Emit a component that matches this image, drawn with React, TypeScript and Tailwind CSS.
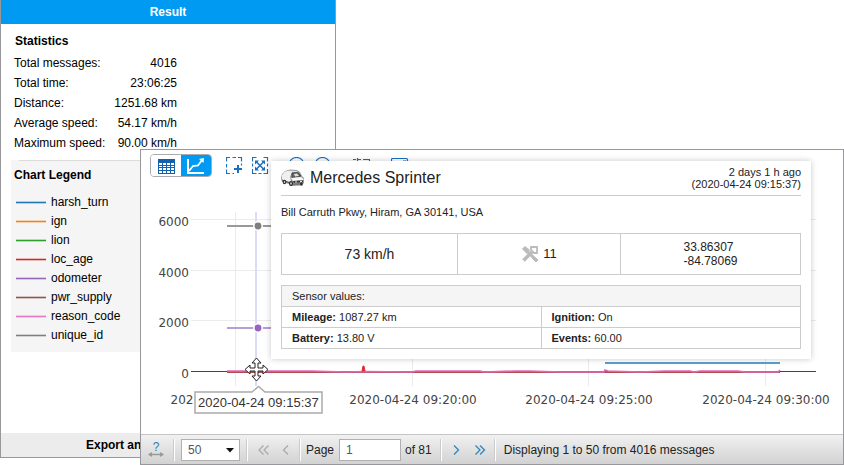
import type { ReactNode } from 'react'

const stats = [
  ['Total messages:', '4016'],
  ['Total time:', '23:06:25'],
  ['Distance:', '1251.68 km'],
  ['Average speed:', '54.17 km/h'],
  ['Maximum speed:', '90.00 km/h'],
]

const legend = [
  { name: 'harsh_turn', color: '#1f77b4' },
  { name: 'ign', color: '#ff7f0e' },
  { name: 'lion', color: '#2ca02c' },
  { name: 'loc_age', color: '#d62728' },
  { name: 'odometer', color: '#9467bd' },
  { name: 'pwr_supply', color: '#8c564b' },
  { name: 'reason_code', color: '#e377c2' },
  { name: 'unique_id', color: '#7f7f7f' },
]

const sensors = [
  [['Mileage', '1087.27 km'], ['Ignition', 'On']],
  [['Battery', '13.80 V'], ['Events', '60.00']],
]

function ResultPanel() {
  return (
    <section className="flex w-[336px] flex-col border-x border-b border-[#98989c] bg-white">
      <h1 className="bg-[#009af3] text-center font-bold leading-6 text-white">Result</h1>
      <div className="px-3 pt-2">
        <h2 className="pl-0.5 font-bold leading-[18px]">Statistics</h2>
        <table className="mt-[3px] w-[164px]">
          <tbody>
            {stats.map(([label, value]) => (
              <tr key={label}>
                <th scope="row" className="whitespace-nowrap p-0 pl-px text-left font-normal leading-5">{label}</th>
                <td className="whitespace-nowrap p-0 text-right leading-5">{value}</td>
              </tr>
            ))}
          </tbody>
        </table>
      </div>
      <div className="mx-2.5 mt-[7px] bg-[#f5f5f5] pb-[7px]">
        <div className="ml-2 h-px bg-[#dcdcdc]" />
        <h2 className="pl-[3px] pt-1 font-bold leading-5">Chart Legend</h2>
        <ul className="pl-[5px] pt-2">
          {legend.map(item => (
            <li key={item.name} className="flex items-center gap-[5px] leading-[19px]">
              <svg width="30" height="5" viewBox="0 0 30 5">
                <path d="M0 2.500H30" stroke={item.color} strokeWidth="3" opacity=".3" />
                <path d="M0 2.500H30" stroke={item.color} strokeWidth="1" />
              </svg>
              {item.name}
            </li>
          ))}
        </ul>
      </div>
      <div className="grow" />
      <button className="bg-[#ececec] pl-[85px] text-left font-bold leading-6">Export and</button>
    </section>
  )
}

function ToolButton({ label, children }: { label: string; children: ReactNode }) {
  return (
    <button aria-label={label} className="h-[18px] w-[18px] shrink-0">
      <svg width="18" height="18" viewBox="0 0 18 18" fill="none" stroke="#1a6fc0" strokeWidth="1.2">
        {children}
      </svg>
    </button>
  )
}

function Toolbar() {
  return (
    <div className="flex items-center px-[9px] pt-1">
      <div className="flex overflow-hidden rounded border border-[#a9abb0]">
        <button aria-label="Table" className="flex h-[21px] w-[30px] items-center justify-center bg-white">
          <svg width="17" height="16" viewBox="0 0 17 16">
            <path d="M0 1H17V16H0Z" fill="#1261ad" />
            <path
              d="M1 5h3v2H1zM5 5h3v2H5zM9 5h3v2H9zM13 5h3v2h-3zM1 8h3v1H1zM5 8h3v1H5zM9 8h3v1H9zM13 8h3v1h-3zM1 10h3v2H1zM5 10h3v2H5zM9 10h3v2H9zM13 10h3v2h-3zM1 13h3v2H1zM5 13h3v2H5zM9 13h3v2H9zM13 13h3v2h-3z"
              fill="#fff"
            />
          </svg>
        </button>
        <button aria-label="Chart" className="flex h-[21px] w-[30px] items-center justify-center bg-[#009af3]">
          <svg width="20" height="18" viewBox="0 0 20 18" fill="none" stroke="#fff">
            <path d="M2 2V16H18" strokeWidth="2" />
            <path d="M3 14L7 9L12 8.500L16 3" strokeWidth="1.800" />
            <path d="M13 2L18 1L17.500 6Z" fill="#fff" stroke="none" />
          </svg>
        </button>
      </div>
      <div className="flex gap-2 pl-3.5">
        <ToolButton label="Select area">
          <path d="M0.500 4.500V0.500H4M6.500 0.500H10M12 0.500H15.500V4.500M0.500 7V10.500M0.500 12.500V16.500H4M6.500 16.500H8M15.500 6.500V8.500" />
          <path d="M12 8V16M8 12H16" strokeWidth="2" />
        </ToolButton>
        <ToolButton label="Fit to screen">
          <path d="M0.500 4.500V0.500H4.500M11.500 0.500H15.500V4.500M0.500 6.500V9.500M15.500 6.500V9.500M0.500 12V16.500H4.500M6.500 16.500H9.500M11.500 16.500H15.500V12" />
          <path d="M4 4.500L12 12.500M12 4.500L4 12.500" strokeWidth="1.500" />
          <path d="M3 3.500H7L3 7.500ZM13 3.500V7.500L9 3.500ZM3 13.500V9.500L7 13.500ZM13 13.500H9L13 9.500Z" fill="#1a6fc0" stroke="none" />
        </ToolButton>
      </div>
      <div className="flex gap-2 pl-[18px]">
        <ToolButton label="Zoom in">
          <circle cx="8.500" cy="8" r="7.500" />
          <path d="M5 8H12M8.500 4V11.500M13 13L17 17" />
        </ToolButton>
        <ToolButton label="Zoom out">
          <circle cx="8.500" cy="8" r="7.500" />
          <path d="M5 8H12M13 13L17 17" />
        </ToolButton>
      </div>
      <div className="flex gap-5 pl-[21px]">
        <ToolButton label="Cut range">
          <path d="M0 2.500H3M4.500 1V17M5 2.500H8M10 2.500H17M16.500 3V7M17 9V16H0" />
        </ToolButton>
        <ToolButton label="Save image">
          <rect x="0.500" y="1.500" width="16" height="15" rx="1" />
          <path d="M3 12L7 8L10 10L15 3.500M12 4H15" />
        </ToolButton>
      </div>
    </div>
  )
}

function Chart() {
  return (
    <svg viewBox="141 177 702 257" className="block w-full">
      <g stroke="#ebebeb" strokeWidth="1">
        <path d="M235.500 212V386M412.500 212V386M588.500 212V386M765.500 212V386" />
        <path d="M191 219.500H816M191 270.500H816M191 320.500H816" />
      </g>
      <path d="M191 371.500H816" stroke="#444" />
      <path d="M256 212V386" stroke="#dadafb" strokeWidth="2" />
      <path d="M227 226H300" stroke="#999" strokeWidth="2" />
      <path d="M227 328H300" stroke="#a17cc8" strokeWidth="1.600" />
      <path d="M605 363H780" stroke="#5a9fcf" strokeWidth="2" />
      <g stroke="#fff" strokeWidth="1.500">
        <circle cx="258" cy="226" r="4.200" fill="#7f7f7f" />
        <circle cx="258" cy="328" r="4.200" fill="#9467bd" />
      </g>
      <path d="M227 372H780" stroke="#b04a55" strokeWidth="2" />
      <path
        d="M227 371L312 371L345 372L365 371.500L412 372L416 371H480L484 372L515 371H530L560 372H604L605 370L608 371L640 372L665 371H690L694 372L700 371H738L745 372H778L780 370"
        fill="none"
        stroke="#df69b5"
        strokeWidth="1.700"
      />
      <path d="M362 371L363 366H364L365 371Z" fill="#d62728" stroke="#e03038" />
      <g fill="#444" fontSize="12" fontFamily="'DejaVu Sans', Verdana, sans-serif" textAnchor="end">
        <text x="189" y="226">6000</text>
        <text x="189" y="277">4000</text>
        <text x="189" y="327">2000</text>
        <text x="189" y="378">0</text>
      </g>
      <g fill="#444" fontSize="12" fontFamily="'DejaVu Sans', Verdana, sans-serif" textAnchor="middle">
        <text x="182" y="404">202</text>
        <text x="413" y="404">2020-04-24 09:20:00</text>
        <text x="589" y="404">2020-04-24 09:25:00</text>
        <text x="766" y="404">2020-04-24 09:30:00</text>
      </g>
      {/* hovered time */}
      <path d="M195 392H252L258.500 386.500L265 392H322V413H195Z" fill="#fff" stroke="#aaa" strokeWidth="1.500" />
      <text x="198" y="407" fontSize="13" fill="#333">2020-04-24 09:15:37</text>
      {/* move cursor */}
      <path
        d="M256.500 358L261 363H258V368H263V365L268 369.500L263 374V371H258V376H261L256.500 381L252 376H255V371H250V374L245 369.500L250 365V368H255V363H252Z"
        fill="#fff"
        stroke="#222"
      />
    </svg>
  )
}

function CarIcon() {
  return (
    <svg width="24" height="18" viewBox="0 0 24 18">
      <path d="M1 5L4 2L9 0.500L16 1L19 3L21 7L23 9V14L20 16.500L11 17L8 15L1 13L0 9Z" fill="#999" />
      <path d="M1 6L4 2.500L9 1.500L11 3L9 8L10 12L7 13L1 11Z" fill="#f0f0f0" />
      <path d="M9 1.500L16 2L17 3L11 3.500Z" fill="#ddd" />
      <path d="M11 4L17 3.500L20 7L11 8.500Z" fill="#666" stroke="#333" strokeWidth=".7" />
      <path d="M13 5L16 4.500L18 7L14 7.500Z" fill="#ddd" />
      <path d="M10 9L20 8L22.500 10V11L12 12Z" fill="#fafafa" />
      <path d="M12 12L22 11.500L22 13L13 14Z" fill="#333" />
      <path d="M14 12.500H16V13.500H14ZM19 12H21V13H19Z" fill="#eee" />
      <path d="M12 14.500L22 13.500L20 16H12Z" fill="#777" />
      <path d="M1 11L8 13.500" stroke="#444" />
      <ellipse cx="3.500" cy="13" rx="1.800" ry="2.300" fill="#333" />
      <ellipse cx="3.500" cy="13" rx=".7" ry="1" fill="#ddd" />
      <ellipse cx="10" cy="14.500" rx="2" ry="2.600" fill="#222" />
      <ellipse cx="10" cy="14.500" rx=".8" ry="1.200" fill="#ddd" />
      <ellipse cx="20.500" cy="15" rx="1.400" ry="1.800" fill="#333" />
    </svg>
  )
}

function UnitCard() {
  return (
    <article className="absolute left-[130px] right-[32px] top-[11px] bg-white px-2.5 pb-2.5 text-[11px] text-[#222] shadow-[0_0_6px_rgba(0,0,0,0.22)]">
      <header className="flex items-center justify-between border-b border-[#ccc] py-1">
        <div className="flex items-center gap-[5px]">
          <CarIcon />
          <h2 className="text-base leading-[26px]">Mercedes Sprinter</h2>
        </div>
        <div className="text-right leading-3">
          <p>2 days 1 h ago</p>
          <p>(2020-04-24 09:15:37)</p>
        </div>
      </header>
      <p className="pb-3 pt-2 leading-[17px]">Bill Carruth Pkwy, Hiram, GA 30141, USA</p>
      <div className="grid h-[42px] grid-cols-[176fr_163fr_179fr] divide-x divide-[#ccc] border border-[#ccc]">
        <div className="flex items-center justify-center text-sm">73 km/h</div>
        <div className="flex items-center justify-center gap-1 text-[13px]">
          <svg width="18" height="18" viewBox="0 0 18 18" fill="none" stroke="#bbb">
            <path d="M3 3L15 15" strokeWidth="3" />
            <path d="M1 4L4 1L9 5L6 9Z" fill="#bbb" stroke="none" />
            <path d="M2.500 15.500L11 7" strokeWidth="3.500" />
            <path d="M10 2H16V8H13L10 5Z" strokeWidth="1.800" />
            <path d="M12 11L17 15L15 17L11 13Z" fill="#bbb" />
          </svg>
          11
        </div>
        <div className="flex items-center justify-center text-xs leading-[14px]">
          <p>33.86307<br />-84.78069</p>
        </div>
      </div>
      <table className="mt-2.5 w-full table-fixed border-collapse leading-5">
        <thead>
          <tr>
            <th colSpan={2} className="border border-[#ccc] bg-[#f5f5f5] px-2.5 py-0 text-left font-normal">Sensor values:</th>
          </tr>
        </thead>
        <tbody>
          {sensors.map(row => (
            <tr key={row[0][0]}>
              {row.map(([name, value]) => (
                <td key={name} className="border border-[#ccc] px-2.5 py-0"><b>{name}:</b> {value}</td>
              ))}
            </tr>
          ))}
        </tbody>
      </table>
    </article>
  )
}

function Separator() {
  return <div className="h-[22px] w-0.5 shrink-0 border-l border-[#cbcbcb] bg-white" />
}

function PageButton({ label, d, color }: { label: string; d: string; color: string }) {
  return (
    <button aria-label={label} className="shrink-0">
      <svg width="12" height="12" viewBox="0 0 12 12" fill="none" stroke={color} strokeWidth="1.3">
        <path d={d} />
      </svg>
    </button>
  )
}

function Pager() {
  return (
    <footer className="flex h-[30px] items-center border-t border-[#c4c4c4] bg-linear-to-b from-[#f1f1f1] to-[#d2d2d2] pl-[7px] text-[#222]">
      <button aria-label="Help" className="shrink-0">
        <svg width="16" height="17" viewBox="0 0 16 17">
          <text x="8" y="10" textAnchor="middle" fontSize="12" fill="#2f7cb3">?</text>
          <path d="M1 13.500H15" stroke="#999" strokeWidth="1.500" />
          <path d="M0 13.500L4 11V16ZM16 13.500L12 11V16Z" fill="#999" />
        </svg>
      </button>
      <div className="flex items-center gap-1.5 pl-[9px]">
        <Separator />
        <div className="relative">
          <select aria-label="Rows per page" defaultValue="50" className="h-[22px] w-[59px] appearance-none border border-[#b0b0b0] bg-white pl-1.5 text-[#555]">
            <option>50</option>
          </select>
          <svg width="8" height="5" viewBox="0 0 8 5" className="pointer-events-none absolute right-1.5 top-[9px]">
            <path d="M0 0H8L4 4.500Z" fill="#111" />
          </svg>
        </div>
        <Separator />
      </div>
      <div className="flex items-center gap-2.5 pl-2.5">
        <PageButton label="First page" d="M5.500 1.500L1 6L5.500 10.500M10.500 1.500L6 6L10.500 10.500" color="#aaa" />
        <PageButton label="Previous page" d="M8 1.500L3.500 6L8 10.500" color="#aaa" />
      </div>
      <div className="flex items-center pl-[7px]">
        <Separator />
        <label htmlFor="page" className="pl-[5px] pr-[5px]">Page</label>
        <input id="page" defaultValue="1" className="h-[22px] w-[62px] border border-[#b0b0b0] bg-white px-1.5 text-[#555]" />
        <span className="whitespace-nowrap pl-1 pr-2">of 81</span>
        <Separator />
      </div>
      <div className="flex items-center gap-3 px-2">
        <PageButton label="Next page" d="M4 1.500L8.500 6L4 10.500" color="#2f86bd" />
        <PageButton label="Last page" d="M1.500 1.500L6 6L1.500 10.500M6 1.500L10.500 6L6 10.500" color="#2f86bd" />
      </div>
      <Separator />
      <p className="whitespace-nowrap pl-2">Displaying 1 to 50 from 4016 messages</p>
    </footer>
  )
}

function ChartWindow() {
  return (
    <section className="absolute left-[140px] right-0 top-[149px] border border-[#98989c] bg-white">
      <Toolbar />
      <Chart />
      <Pager />
      <UnitCard />
    </section>
  )
}

export default function App() {
  return (
    <main className="relative flex h-screen min-h-[465px] bg-white pb-[7px] font-['Liberation_Sans',Arial,sans-serif] text-xs text-black">
      <ResultPanel />
      <ChartWindow />
    </main>
  )
}
